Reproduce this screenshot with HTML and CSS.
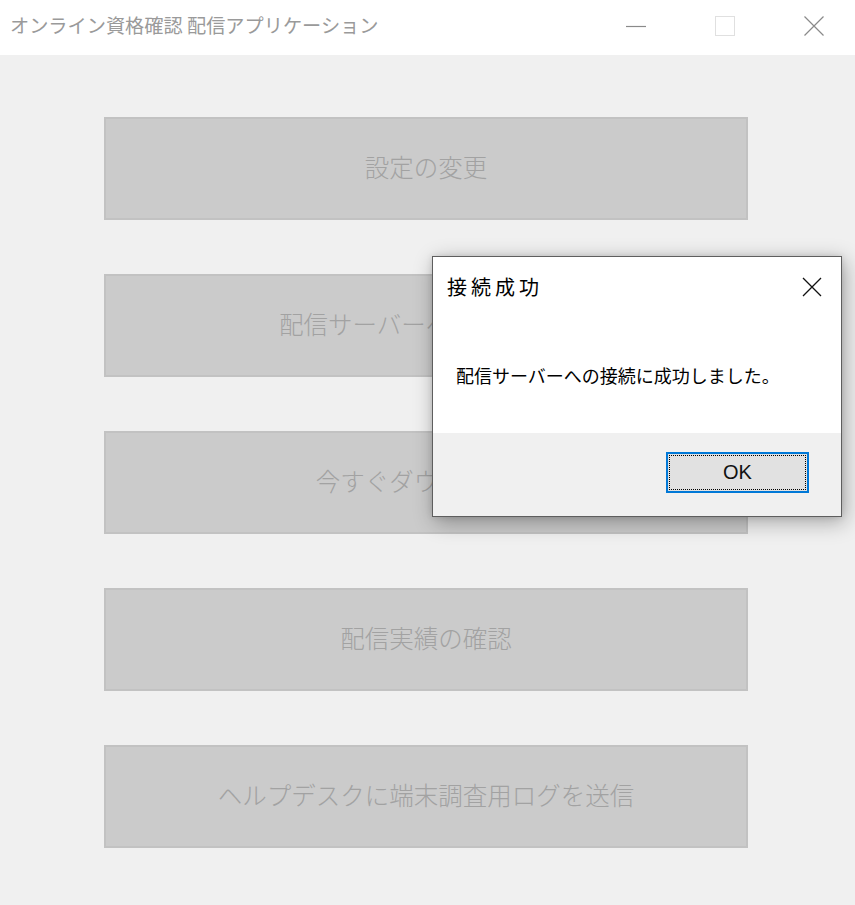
FILE: index.html
```html
<!DOCTYPE html>
<html lang="ja">
<head>
<meta charset="utf-8">
<title>オンライン資格確認 配信アプリケーション</title>
<link rel="stylesheet" href="styles.css">
</head>
<body>
<div class="window">
  <header class="titlebar">
    <div class="title">オンライン資格確認 配信アプリケーション</div>
    <div class="controls">
      <div class="ctl">
        <svg width="20" height="20" viewBox="0 0 20 20"><line x1="0" y1="10.5" x2="20" y2="10.5" stroke="#8a8a8a" stroke-width="1.2"/></svg>
      </div>
      <div class="ctl">
        <svg width="20" height="20" viewBox="0 0 20 20"><rect x="0.5" y="0.5" width="19" height="19" fill="none" stroke="#e0e0e0" stroke-width="1"/></svg>
      </div>
      <div class="ctl">
        <svg width="20" height="20" viewBox="0 0 20 20"><path d="M0.5 0.5 L19.5 19.5 M19.5 0.5 L0.5 19.5" stroke="#8a8a8a" stroke-width="1.2" fill="none"/></svg>
      </div>
    </div>
  </header>
  <main class="client">
    <div class="btn">設定の変更</div>
    <div class="btn">配信サーバーへの接続確認</div>
    <div class="btn">今すぐダウンロード</div>
    <div class="btn">配信実績の確認</div>
    <div class="btn">ヘルプデスクに端末調査用ログを送信</div>
  </main>

  <div class="dialog">
    <div class="dlg-head">
      <div class="dlg-title">接続成功</div>
      <svg class="dlg-close" width="20" height="20" viewBox="0 0 20 20"><path d="M1 1 L19 19 M19 1 L1 19" stroke="#111" stroke-width="1.3" fill="none"/></svg>
    </div>
    <div class="dlg-body">配信サーバーへの接続に成功しました。</div>
    <div class="dlg-foot">
      <div class="ok">OK</div>
    </div>
  </div>
</div>
</body>
</html>
```

FILE: styles.css
```css
html, body {
  margin: 0;
  padding: 0;
}
body {
  background: #f0f0f0;
  font-family: "Noto Sans CJK JP", "Noto Sans", sans-serif;
}
.window {
  position: relative;
  width: 855px;
  height: 905px;
  overflow: hidden;
  background: #f0f0f0;
}
.titlebar {
  height: 55px;
  background: #ffffff;
  display: flex;
  align-items: center;
}
.title {
  padding-left: 10px;
  font-size: 19.2px;
  color: #9a9a9a;
  white-space: nowrap;
  margin-top: -5px;
}
.controls {
  margin-left: auto;
  margin-right: -3px;
  display: flex;
  height: 100%;
}
.ctl {
  width: 89px;
  display: flex;
  align-items: center;
  justify-content: center;
  margin-top: -4px;
}
.client {
  padding: 62px 0 0 104px;
  display: flex;
  flex-direction: column;
  gap: 54px;
}
.btn {
  box-sizing: border-box;
  width: 644px;
  height: 103px;
  background: #cbcbcb;
  border: 2px solid #c2c2c2;
  display: flex;
  align-items: center;
  justify-content: center;
  font-size: 24.5px;
  color: #a2a2a2;
  font-weight: 300;
  padding-bottom: 4px;
}
.dialog {
  position: absolute;
  left: 432px;
  top: 256px;
  width: 410px;
  height: 261px;
  box-sizing: border-box;
  border: 1px solid #5e5e5e;
  background: #ffffff;
  box-shadow: 3px 5px 20px rgba(0, 0, 0, 0.32), 0 0 6px rgba(0, 0, 0, 0.12);
  display: flex;
  flex-direction: column;
}
.dlg-head {
  height: 60px;
  display: flex;
  align-items: center;
  padding: 0 19px 0 14px;
}
.dlg-title {
  font-size: 20px;
  letter-spacing: 4px;
  color: #000;
  margin-top: -2px;
}
.dlg-close {
  margin-left: auto;
}
.dlg-body {
  flex: 1;
  padding: 46px 0 0 23px;
  font-size: 18px;
  line-height: 24px;
  color: #000;
}
.dlg-foot {
  height: 83px;
  background: #f0f0f0;
  display: flex;
  justify-content: flex-end;
  align-items: flex-start;
  padding: 19px 32px 0 0;
  box-sizing: border-box;
}
.ok {
  position: relative;
  box-sizing: border-box;
  width: 143px;
  height: 41px;
  background: #e1e1e1;
  border: 2px solid #0078d7;
  display: flex;
  align-items: center;
  justify-content: center;
  font-family: "Liberation Sans", Arial, sans-serif;
  font-size: 20px;
  color: #111;
}
.ok::after {
  content: "";
  position: absolute;
  inset: 1px;
  border: 1px dotted #000;
}
```
